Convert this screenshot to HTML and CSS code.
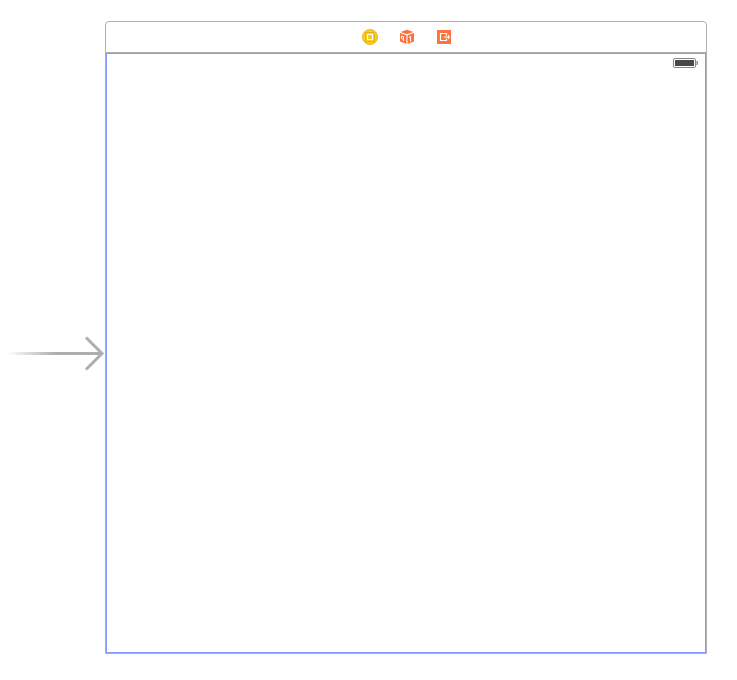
FILE: index.html
```html
<!DOCTYPE html>
<html lang="en">
<head>
<meta charset="utf-8">
<title>Storyboard</title>
<link rel="stylesheet" href="styles.css">
</head>
<body>
<main class="canvas">
  <svg class="entry-arrow" width="105" height="40" viewBox="0 0 105 40" aria-hidden="true">
    <defs>
      <linearGradient id="fade" gradientUnits="userSpaceOnUse" x1="7" y1="0" x2="56" y2="0">
        <stop offset="0" stop-color="#aeaeae" stop-opacity="0"/>
        <stop offset="1" stop-color="#aeaeae"/>
      </linearGradient>
    </defs>
    <rect x="7" y="19" width="95" height="3" fill="url(#fade)"/>
    <path d="M86 4.500 102 20.500 86 36.500" fill="none" stroke="#aeaeae" stroke-width="3"/>
  </svg>
  <section class="scene">
    <header class="dock">
      <svg width="16" height="16" viewBox="0 0 16 16" aria-hidden="true">
        <circle cx="8" cy="8" r="7.500" fill="#fdcf22" stroke="#eab51b"/>
        <rect x="3.500" y="3.500" width="9" height="9" fill="#fdcf22" stroke="#e8b414"/>
        <rect x="5.500" y="5.500" width="5" height="5" fill="#fbc91f" stroke="#fff"/>
      </svg>
      <svg width="16" height="16" viewBox="0 0 16 16" aria-hidden="true">
        <path d="M1.500 3 8 .8 14.500 3 8 5.200Z" fill="#fb743e"/>
        <path d="M1 4 7.500 6.200V15L1 12.500Z" fill="#fb743e"/>
        <path d="M15 4 8.500 6.200V15L15 12.500Z" fill="#fb743e"/>
        <path d="M2.500 7 4.500 7.700V10.200L2.500 9.500ZM4.500 10V12" fill="none" stroke="#fff" stroke-width=".9"/>
        <path d="M10 8.300 11.500 7.500V12.500" fill="none" stroke="#fff" stroke-width="1"/>
      </svg>
      <svg width="16" height="16" viewBox="0 0 16 16" aria-hidden="true">
        <rect x="1" y="1" width="14" height="14" fill="#fb743e"/>
        <path d="M10.500 6.500V4.500H4.500V11.500H10.500V9.500M8 8H14M12.500 6V10" fill="none" stroke="#fff" stroke-width="1.200"/>
      </svg>
    </header>
    <div class="view">
      <svg class="battery" width="25" height="10" viewBox="0 0 25 10" aria-hidden="true">
        <rect x=".5" y=".5" width="22" height="9" rx="1.500" fill="#fff" stroke="#858585"/>
        <rect x="2" y="2" width="19" height="6" rx=".5" fill="#484848"/>
        <path d="M24 3Q25 5 24 7Z" fill="#666" stroke="#666" stroke-width=".6"/>
      </svg>
    </div>
  </section>
</main>
</body>
</html>
```
FILE: styles.css
```css
* {
  box-sizing: border-box;
}

body {
  margin: 0;
  background: #fff;
}

.canvas {
  display: flex;
  width: 737px;
  height: 680px;
  padding-top: 21px;
  overflow: hidden;
}

.entry-arrow {
  flex: none;
  margin-top: 312px;
}

.scene {
  width: 602px;
  height: 633px;
  border: 1px solid #b0b0b0;
  border-radius: 4px 4px 0 0;
}

.dock {
  display: flex;
  align-items: center;
  justify-content: center;
  gap: 21px;
  height: 31px;
  padding-left: 1px;
  border-bottom: 1px solid #b0b0b0;
}

.view {
  display: flex;
  justify-content: flex-end;
  align-items: flex-start;
  height: 600px;
  padding: 4px 7px 0 0;
  border: 1px solid #8599ff;
}

.battery {
  flex: none;
}
```
